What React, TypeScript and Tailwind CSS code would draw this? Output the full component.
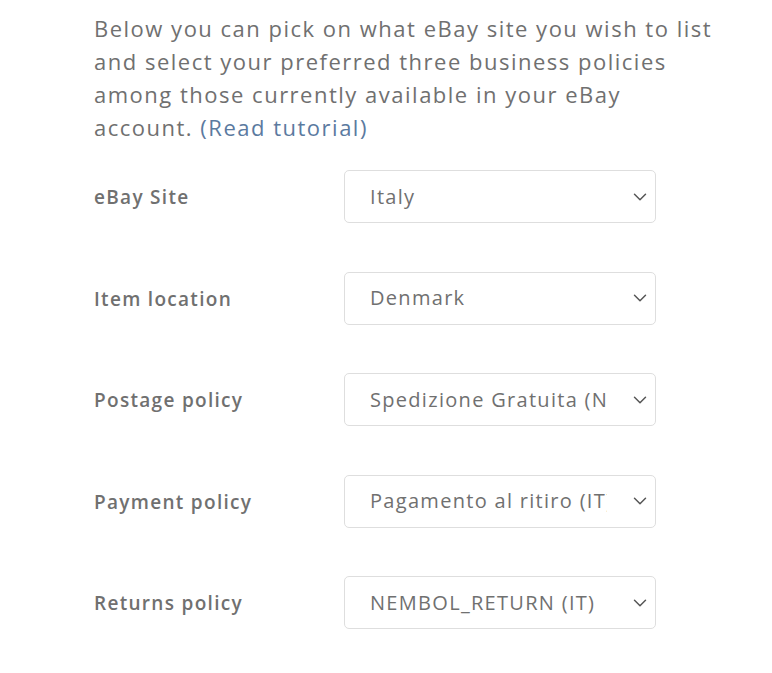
import { ChevronDown } from 'lucide-react';

const rows = [
  { label: 'eBay Site', value: 'Italy' },
  { label: 'Item location', value: 'Denmark' },
  { label: 'Postage policy', value: 'Spedizione Gratuita (Nuovo)' },
  { label: 'Payment policy', value: 'Pagamento al ritiro (IT)' },
  { label: 'Returns policy', value: 'NEMBOL_RETURN (IT)' },
];

export default function App() {
  return (
    <div
      className="min-h-screen bg-white pl-[94px] pr-[40px] pt-[12px]"
      style={{ fontFamily: '"Open Sans", "Liberation Sans", sans-serif' }}
    >
      <p className="max-w-[630px] text-[22px] leading-[33px] tracking-[1.5px] text-[#707070]">
        Below you can pick on what eBay site you wish to list and select your preferred three
        business policies among those currently available in your eBay account.{' '}
        <a className="text-[#5b7aa0]">(Read tutorial)</a>
      </p>

      <div className="mt-[26px] flex flex-col gap-[48.5px]">
        {rows.map((r) => (
          <div key={r.label} className="flex items-center">
            <div className="w-[250px] shrink-0 pt-[2px] text-[19px] font-semibold tracking-[1.3px] text-[#707070]">
              {r.label}
            </div>
            <div className="relative flex h-[53px] w-[312px] items-center rounded-[5px] border border-[#dedede] bg-white pl-[25px] pr-[48px]">
              <span className="overflow-hidden whitespace-nowrap text-[20px] tracking-[1.3px] text-[#707070]">
                {r.value}
              </span>
              <ChevronDown
                size={22}
                strokeWidth={1.6}
                className="absolute right-[4px] top-1/2 -translate-y-1/2 text-[#555]"
              />
            </div>
          </div>
        ))}
      </div>
    </div>
  );
}
